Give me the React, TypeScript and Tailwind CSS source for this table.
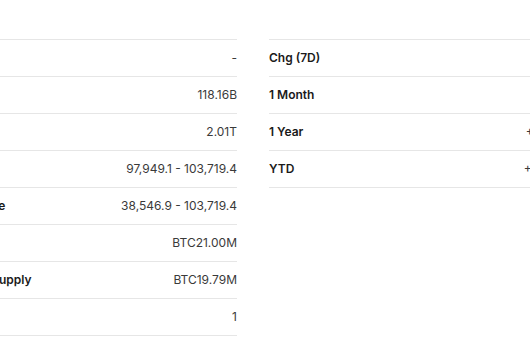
const leftRows = [
  { label: "Prev. Close", value: "-" },
  { label: "Vol (24H)", value: "118.16B" },
  { label: "Market Cap", value: "2.01T" },
  { label: "Day's Range", value: "97,949.1 - 103,719.4" },
  { label: "52 Wk. Range", value: "38,546.9 - 103,719.4" },
  { label: "Max Supply", value: "BTC21.00M" },
  { label: "Circulating Supply", value: "BTC19.79M" },
  { label: "Rank", value: "1" },
]

const rightRows = [
  { label: "Chg (7D)", value: "+4.21%" },
  { label: "1 Month", value: "+6.38%" },
  { label: "1 Year", value: "+118.46%" },
  { label: "YTD", value: "+109.52%" },
]

function StatTable({ rows }: { rows: { label: string; value: string }[] }) {
  return (
    <div className="w-[312px] shrink-0 border-t border-[#e6e6e6]">
      {rows.map((row) => (
        <div key={row.label} className="flex h-[37px] items-center justify-between border-b border-[#e6e6e6]">
          <span className="whitespace-nowrap text-[12px] font-semibold text-[#1a1a1a]">{row.label}</span>
          <span className="whitespace-nowrap text-[12px] text-[#3a3a3a]">{row.value}</span>
        </div>
      ))}
    </div>
  )
}

export default function App() {
  return (
    <div className="h-[355px] w-[530px] overflow-hidden bg-white font-['Inter',sans-serif]">
      <div className="ml-[-75px] flex gap-8 pt-[39px]">
        <StatTable rows={leftRows} />
        <StatTable rows={rightRows} />
      </div>
    </div>
  )
}
